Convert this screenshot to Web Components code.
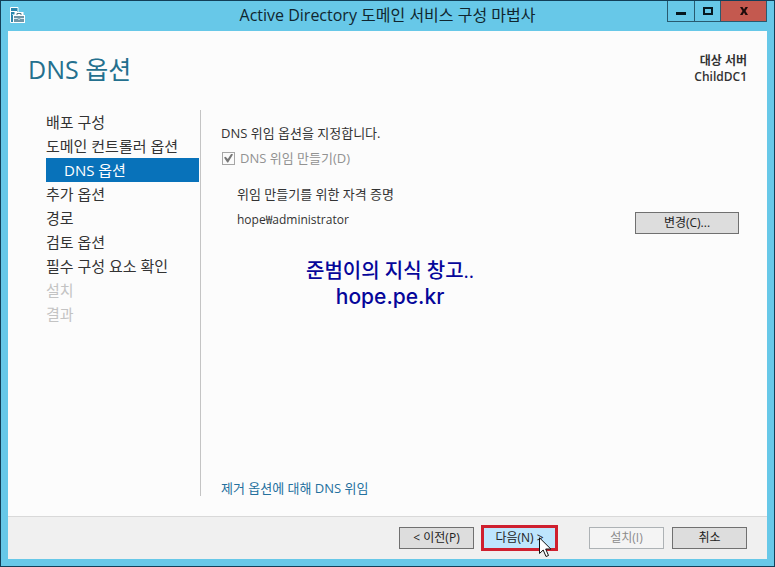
<!DOCTYPE html>
<html lang="ko">
<head>
<meta charset="utf-8">
<title>Active Directory 도메인 서비스 구성 마법사</title>
<style>
  body { margin: 0; font-family: "Open Sans", "Noto Sans CJK KR", sans-serif; font-size: 13px; color: #333; }
</style>
</head>
<body>
<wizard-window caption="Active Directory 도메인 서비스 구성 마법사">
  <wizard-header slot="header" heading="DNS 옵션"><span>대상 서버</span><span>ChildDC1</span></wizard-header>
  <wizard-steps slot="steps">
    <wizard-step>배포 구성</wizard-step>
    <wizard-step>도메인 컨트롤러 옵션</wizard-step>
    <wizard-step current>DNS 옵션</wizard-step>
    <wizard-step>추가 옵션</wizard-step>
    <wizard-step>경로</wizard-step>
    <wizard-step>검토 옵션</wizard-step>
    <wizard-step>필수 구성 요소 확인</wizard-step>
    <wizard-step disabled>설치</wizard-step>
    <wizard-step disabled>결과</wizard-step>
  </wizard-steps>
  <dns-options></dns-options>
  <wizard-footer slot="footer"></wizard-footer>
</wizard-window>

<script>
function define(name, html, setup) {
  const template = document.createElement('template');
  template.innerHTML = html;
  customElements.define(name, class extends HTMLElement {
    connectedCallback() {
      if (this.shadowRoot) return;
      this.attachShadow({ mode: 'open' }).append(template.content.cloneNode(true));
      if (setup) setup(this, this.shadowRoot);
    }
  });
}

define('wizard-window', `
  <style>
    :host { display: flex; flex-direction: column; box-sizing: border-box; min-height: 100vh;
      background: #67c8e8; border: 1px solid #123f58; padding: 0 7px 7px; }
    .bar { display: grid; grid-template-columns: 100px 1fr 100px; align-items: start; height: 30px; }
    .app { margin: 6px 0 0 1px; }
    h1 { margin: 2px 0 0; font-size: 16px; line-height: 24px; font-weight: 400; color: #10262f; text-align: center; white-space: nowrap; }
    .client { flex: 1; display: flex; flex-direction: column; background: #fcfcfc; }
    .body { flex: 1; display: flex; padding: 0 20px 20px 38px; }
    ::slotted(dns-options) { flex: 1; }
  </style>
  <div class="bar">
    <svg class="app" width="18" height="18" viewBox="0 0 18 18" aria-hidden="true">
      <path d="M1.500 15.500V.5H9V15.500Z" fill="#2a86ad" stroke="#fff"/>
      <path d="M2 4.500H8" stroke="#fff"/>
      <path d="M3 7.500H6" stroke="#9fd0e2"/>
      <path d="M7 8.500V6.500H13V8.500" fill="none" stroke="#fff" stroke-width="3"/>
      <rect x="4.500" y="8.500" width="11" height="7" fill="#6f95a6" stroke="#fff"/>
      <path d="M8 8V6.500H12V8" fill="none" stroke="#527887"/>
      <path d="M5 11.500H8.500L10 12.500L11.500 11.500H15" fill="none" stroke="#dbeaf0"/>
    </svg>
    <h1></h1>
    <caption-buttons></caption-buttons>
  </div>
  <div class="client">
    <slot name="header"></slot>
    <div class="body"><slot name="steps"></slot><slot></slot></div>
    <slot name="footer"></slot>
  </div>`, (host, root) => { root.querySelector('h1').textContent = host.getAttribute('caption'); });

define('caption-buttons', `
  <style>
    :host { display: flex; justify-content: flex-end; }
    button { box-sizing: border-box; width: 27px; height: 21px; margin: 0; padding: 0; border: 1px solid #285a70; border-width: 0 0 1px 1px;
      background: #67c8e8; display: grid; place-items: center; }
    .close { width: 47px; background: #c4594f; border-right-width: 1px; }
  </style>
  <button aria-label="최소화"><svg width="12" height="12"><path d="M1 7H11V10H1Z" fill="#061820"/></svg></button>
  <button aria-label="최대화"><svg width="12" height="12"><path d="M2 3H10V9H2Z" fill="none" stroke="#061820" stroke-width="2"/></svg></button>
  <button class="close" aria-label="닫기"><svg width="12" height="12"><path d="M2 2H4.500L6 4.500L7.500 2H10L7.500 6L10 10H7.500L6 7.500L4.500 10H2L4.500 6Z" fill="#1c0b0b"/></svg></button>`);

define('wizard-header', `
  <style>
    :host { display: flex; justify-content: space-between; align-items: flex-start; padding: 22px 20px 25px; }
    h2 { margin: 0; font-size: 25px; line-height: 32px; font-weight: 400; color: #24708e; }
    .target { display: flex; flex-direction: column; text-align: right; font-size: 12px; line-height: 16px; font-weight: 600; color: #333; }
  </style>
  <h2></h2><div class="target"><slot></slot></div>`,
  (host, root) => { root.querySelector('h2').textContent = host.getAttribute('heading'); });

define('wizard-steps', `
  <style>
    :host { display: block; box-sizing: border-box; width: 155px; padding-right: 1px; border-right: 1px solid #c4c4c4; }
  </style>
  <slot></slot>`);

define('wizard-step', `
  <style>
    :host { display: block; font-size: 15px; line-height: 24px; color: #333; white-space: nowrap; }
    :host([current]) { padding-left: 18px; background: #0872ba; color: #fff; }
    :host([disabled]) { color: #c3c3c3; }
  </style>
  <slot></slot>`);

define('push-button', `
  <style>
    :host { display: block; width: 75px; }
    button { box-sizing: border-box; width: 100%; height: 22px; margin: 0; padding: 0; border: 1px solid #707070;
      background: #dddddd; color: #222; font: inherit; font-size: 12px; line-height: 20px; }
    button:disabled { background: #f4f4f4; border-color: #adb2b5; color: #8b8b8b; }
    :host([hot]) button { background: #bee6fd; border-color: #3c9fd0; }
  </style>
  <button><slot></slot></button>`,
  (host, root) => { root.querySelector('button').disabled = host.hasAttribute('disabled'); });

define('dns-options', `
  <style>
    :host { display: flex; flex-direction: column; padding: 13px 8px 0 20px; line-height: 20px; }
    p { margin: 0; }
    .check { display: flex; align-items: center; gap: 5px; margin-top: 5px; color: #929292; }
    input { appearance: none; box-sizing: border-box; width: 13px; height: 13px; margin: 0 0 0 1px; border: 1px solid #a6a6a6; background: #fbfbfb;
      display: grid; place-items: center; }
    input::before { content: ""; width: 9px; height: 9px; background: #777; clip-path: polygon(0 45%, 18% 35%, 42% 62%, 82% 0, 100% 12%, 46% 100%, 36% 100%); }
    .creds { margin-top: 16px; padding-left: 16px; }
    .row { display: flex; justify-content: space-between; align-items: flex-start; margin-top: 6px; }
    .row span { font-size: 12px; }
    .row push-button { width: 104px; margin-top: 2px; }
    .mark { align-self: flex-start; margin: 24px 0 0 85px; text-align: center; font-size: 20px; line-height: 26px; font-weight: 500; color: #06069a; }
    .site { font-family: Inter, sans-serif; font-size: 21px; }
    a { margin-top: auto; margin-bottom: -2px; align-self: flex-start; color: #24709e; text-decoration: none; }
  </style>
  <p>DNS 위임 옵션을 지정합니다.</p>
  <div class="check"><input type="checkbox" id="delegate" checked disabled><label for="delegate">DNS 위임 만들기(D)</label></div>
  <div class="creds">
    <p>위임 만들기를 위한 자격 증명</p>
    <div class="row"><span>hope₩administrator</span><push-button>변경(C)...</push-button></div>
  </div>
  <div class="mark"><div>준범이의 지식 창고..</div><div class="site">hope.pe.kr</div></div>
  <a href="#">제거 옵션에 대해 DNS 위임</a>`);

define('wizard-footer', `
  <style>
    :host { display: flex; justify-content: flex-end; gap: 8px; padding: 10px 20px; border-top: 1px solid #d9d9d9; background: #f0f0f0; }
    .next { position: relative; margin-right: 24px; }
    .next::after { content: ""; position: absolute; inset: -2px -1px; border: 3px solid #cf202f; pointer-events: none; }
    .next svg { position: absolute; z-index: 1; left: 57px; top: 10px; }
  </style>
  <push-button>&lt; 이전(P)</push-button>
  <div class="next"><push-button hot>다음(N) &gt;</push-button>
    <svg width="13" height="21" viewBox="0 0 13 21" aria-hidden="true"><path d="M.5 .8V16.500L4.200 13L7 19.500L9.500 18.500L6.700 12H11.800Z" fill="#fff" stroke="#111"/></svg>
  </div>
  <push-button disabled>설치(I)</push-button>
  <push-button>취소</push-button>`);
</script>
</body>
</html>
